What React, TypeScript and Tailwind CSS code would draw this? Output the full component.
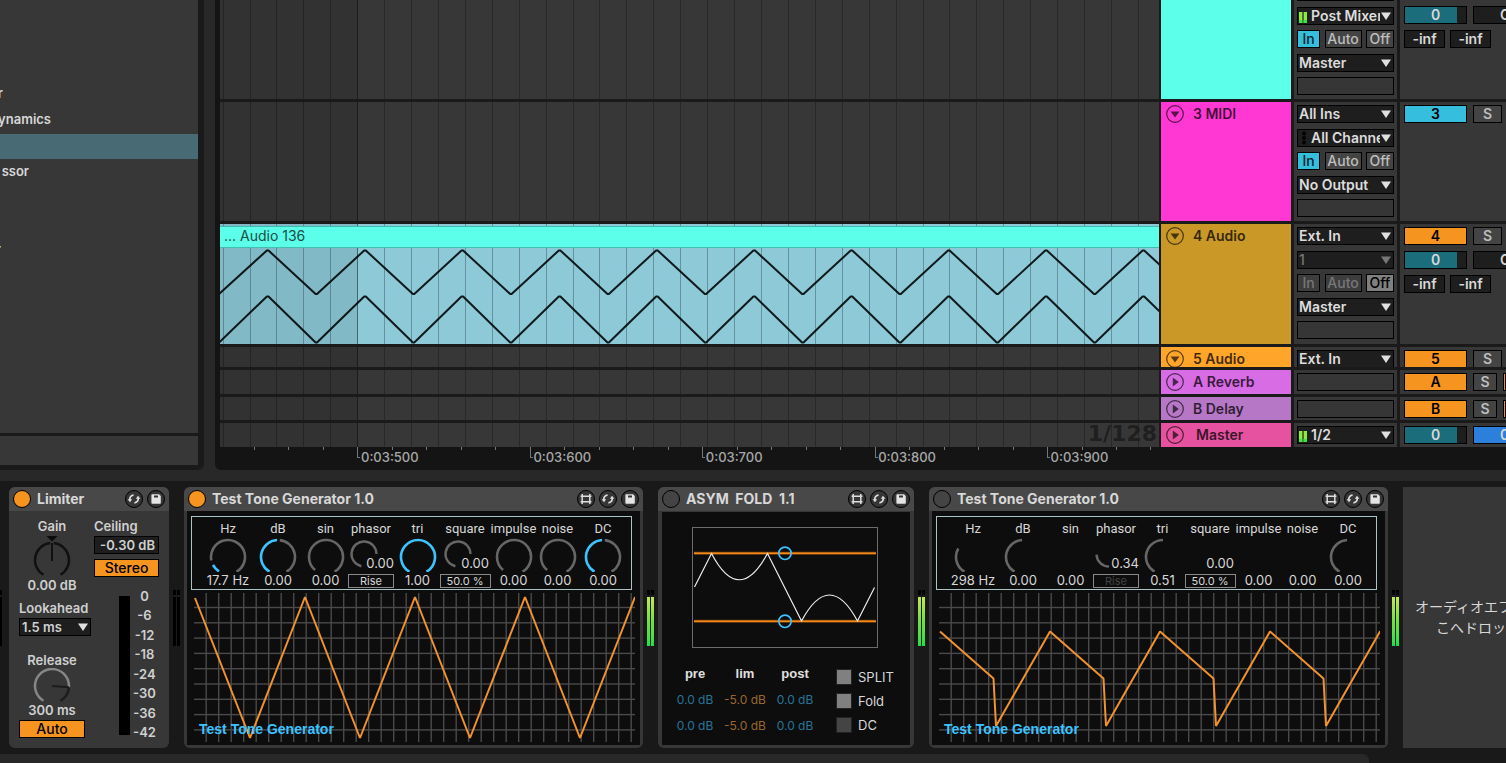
import type { ReactNode } from "react"
import clsx from "clsx"

const BLUE = "#3cc3ff"

const GRID_X = Array.from({ length: 80 }, (_, i) => Math.round(2.6 + i * 26.92))
const TICKS = Array.from({ length: 60 }, (_, i) => Math.round(34 + i * 34.48))

function polar(cx: number, cy: number, r: number, deg: number) {
  const a = ((deg - 90) * Math.PI) / 180
  return `${(cx + r * Math.cos(a)).toFixed(2)} ${(cy + r * Math.sin(a)).toFixed(2)}`
}

function arc(cx: number, cy: number, r: number, from: number, to: number) {
  return `M${polar(cx, cy, r, from)} A${r} ${r} 0 ${to - from > 180 ? 1 : 0} 1 ${polar(cx, cy, r, to)}`
}

/* ---------- arrangement ---------- */

function GridLines() {
  return (
    <svg className="absolute inset-0 w-full h-full" shapeRendering="crispEdges">
      <rect x="0" y="0" width="137" height="100%" fill="#000" opacity="0.08" />
      {GRID_X.map((x) => (
        <rect key={x} x={x} y="0" width="1" height="100%" fill="#000" opacity={x === 137 ? 0.5 : 0.27} />
      ))}
    </svg>
  )
}

function zigzag(top: number, bottom: number) {
  const pts = [`-1,${bottom}`]
  for (let i = 0; i < 22; i++) {
    const x = 47.7 + i * 97.3
    pts.push(`${x - 0.8},${top}`, `${x + 0.8},${top}`, `${x + 47.9},${bottom}`, `${x + 49.3},${bottom}`)
  }
  return pts.join(" ")
}

function Clip() {
  return (
    <div className="relative h-full bg-[#8dc9d7] pt-[2px]">
      <div className="absolute inset-0 overflow-hidden">
        <svg className="w-full h-full">
          <g fill="none" stroke="#10191b" strokeWidth="2" strokeLinejoin="round">
            <polyline points={zigzag(26.5, 70)} />
            <polyline points={zigzag(72.5, 118.5)} />
          </g>
        </svg>
        <GridLines />
      </div>
      <div className="relative h-[22px] bg-[#5cffe9] border-y border-[#41bfae] px-1 text-[14px] leading-[18px] text-[#1b4d46]">
        ... Audio 136
      </div>
    </div>
  )
}

function Caret({ dim }: { dim?: boolean }) {
  return (
    <svg className="absolute right-[2px] top-1 pointer-events-none" width="10" height="8" viewBox="0 0 10 8">
      <path d="M0 0.5H10L5 8z" fill={dim ? "#777" : "#e0e0e0"} />
    </svg>
  )
}

function MiniMeter() {
  return (
    <svg className="absolute left-px top-1" width="8" height="12">
      <path d="M0 0h3.400v11h-3.400zM4.600 0h3.400v11h-3.400z" fill="#8cec3e" />
      <path d="M0 8h3.400v3h-3.400zM4.600 8h3.400v3h-3.400z" fill="#3ee548" />
    </svg>
  )
}

function MidiDots() {
  return (
    <svg className="absolute left-[3px] top-px" width="6" height="14" fill="#000">
      <circle cx="3" cy="2.5" r="2" /><circle cx="3" cy="7" r="2" /><circle cx="3" cy="11.5" r="2" />
    </svg>
  )
}

function Chooser({ value, label, dim, icon }: { value: string; label: string; dim?: boolean; icon?: ReactNode }) {
  return (
    <div className="relative h-[18px] bg-[#1e1e1e] border border-black overflow-hidden">
      {icon}
      <div className="pr-[13px]">
        <select
          aria-label={label}
          className={clsx(
            "appearance-none block w-full h-4 leading-4 bg-transparent outline-none overflow-hidden text-[14px]",
            icon ? "pl-[13px]" : "pl-px",
            dim ? "text-[#777] font-medium" : "text-[#dcdcdc] font-semibold",
          )}
        >
          <option>{value}</option>
        </select>
      </div>
      <Caret dim={dim} />
    </div>
  )
}

const BTN = "h-[18px] shrink-0 border border-black flex items-center justify-center leading-4 overflow-hidden"
const MIX = "text-[14px] font-semibold"

function Monitor({ active, muted }: { active: "In" | "Off"; muted?: boolean }) {
  const idle = muted ? "bg-[#3d3d3d] text-[#777]" : "bg-[#444] text-[#bebebe]"
  return (
    <div className="flex justify-between text-[14px] font-medium">
      <button className={clsx(BTN, "w-[23px]", active === "In" ? "bg-[#35bfdc] text-[#06222a]" : idle)}>In</button>
      <button className={clsx(BTN, "w-[37px]", idle)}>Auto</button>
      <button className={clsx(BTN, "w-[28px]", active === "Off" ? "bg-[#808080] text-black" : idle)}>Off</button>
    </div>
  )
}

const Empty = () => <div className="h-[18px] border border-black bg-[#363636]" />

function Volume() {
  return (
    <div className={clsx(BTN, MIX, "relative w-[63px] bg-[#1e1e1e] text-[#d8d8d8]")}>
      <div className="absolute inset-y-0 left-0 w-[52px] bg-[#1c6d7c]" />
      <span className="relative">0</span>
    </div>
  )
}

function Activator({ name, blue }: { name: string; blue?: boolean }) {
  return (
    <button aria-label={`Track activator ${name}`} className={clsx(BTN, MIX, "w-[63px] text-black", blue ? "bg-[#35bfdc]" : "bg-[#f5941f]")}>
      {name}
    </button>
  )
}

function Solo({ narrow }: { narrow?: boolean }) {
  return <button className={clsx(BTN, MIX, "bg-[#444] text-[#bebebe]", narrow ? "w-[24px]" : "w-[29px]")}>S</button>
}

function Pan({ value, color }: { value: string; color: string }) {
  return <div className={clsx("h-[18px] w-[63px] shrink-0 border border-black leading-4 text-[#d8d8d8] pl-[26px]", MIX, color)}>{value}</div>
}

function Levels() {
  return (
    <>
      <div className="flex gap-[6px]">
        <Volume />
        <Pan value="C" color="bg-[#1e1e1e]" />
      </div>
      <div className="flex gap-[5px]">
        <div className={clsx(BTN, MIX, "w-[41px] bg-[#1e1e1e] text-[#d8d8d8]")}>-inf</div>
        <div className={clsx(BTN, MIX, "w-[41px] bg-[#1e1e1e] text-[#d8d8d8]")}>-inf</div>
      </div>
    </>
  )
}

interface TrackProps {
  name?: string; height: string; color: string; open?: boolean; indent?: boolean
  lane?: ReactNode; io: ReactNode; mixer: ReactNode; cut?: boolean
}

function Track({ name, height, color, open, indent, lane, io, mixer, cut }: TrackProps) {
  return (
    <div className={clsx("flex", height)}>
      <div className="relative flex-1 min-w-0 overflow-hidden bg-[#373737]">{lane ?? <GridLines />}</div>
      <div className={clsx("ml-[2px] w-[130px] overflow-hidden", color)}>
        {name && (
          <div className={clsx("flex items-center pl-[5px] pt-[3px] leading-[18px] text-black/75", MIX)}>
            <svg className="shrink-0" width="18" height="18" viewBox="0 0 18 18">
              <circle cx="9" cy="9" r="8.300" fill="none" stroke="#000" strokeOpacity="0.65" strokeWidth="1.2" />
              <path d={open ? "M4.5 6.5h9L9 12.5z" : "M6.8 4.5v9L12.8 9z"} fill="#000" fillOpacity="0.65" />
            </svg>
            <span className={indent ? "pl-3" : "pl-[9px]"}>{name}</span>
          </div>
        )}
      </div>
      <div className={clsx("ml-[3px] flex w-[103px] overflow-hidden bg-[#373737] px-[3px]", cut ? "items-end pb-1" : "items-start pt-[3px]")}>
        <div className="w-full">{io}</div>
      </div>
      <div className={clsx("ml-[3px] flex w-[106px] overflow-hidden bg-[#373737] pl-1", cut ? "items-end pb-[5px]" : "items-start pt-[3px]")}>
        <div className="w-full">{mixer}</div>
      </div>
    </div>
  )
}

const STACK = "flex flex-col justify-between h-[112px] shrink-0"
const LOOSE = "flex flex-col justify-start h-[112px] shrink-0 gap-[6px]"

function Arrangement() {
  return (
    <section className="flex-1 min-w-0 bg-[#141414] rounded-bl-md pl-[5px]">
      <div className="flex flex-col gap-[3px] bg-[#1a1a1a]">
        <Track
          height="h-[99px]" color="bg-[#5cffe9]" cut
          io={
            <div className={STACK}>
              <Empty />
              <Chooser label="Input channel" value="Post Mixer" icon={<MiniMeter />} />
              <Monitor active="In" />
              <Chooser label="Output" value="Master" />
              <Empty />
            </div>
          }
          mixer={
            <div className={LOOSE}>
              <Empty />
              <Levels />
            </div>
          }
        />
        <Track
          name="3 MIDI" height="h-[119px]" color="bg-[#ff38d4]" open
          io={
            <div className={STACK}>
              <Chooser label="MIDI from" value="All Ins" />
              <Chooser label="MIDI channel" value="All Channels" icon={<MidiDots />} />
              <Monitor active="In" />
              <Chooser label="MIDI to" value="No Output" />
              <Empty />
            </div>
          }
          mixer={<div className="flex gap-[6px]"><Activator name="3" blue /><Solo /></div>}
        />
        <Track
          name="4 Audio" height="h-[120px]" color="bg-[#c99827]" open lane={<Clip />}
          io={
            <div className={STACK}>
              <Chooser label="Audio from" value="Ext. In" />
              <Chooser label="Audio channel" value="1" dim />
              <Monitor active="Off" muted />
              <Chooser label="Audio to" value="Master" />
              <Empty />
            </div>
          }
          mixer={
            <div className={LOOSE}>
              <div className="flex gap-[6px]"><Activator name="4" /><Solo /></div>
              <Levels />
            </div>
          }
        />
        <Track
          name="5 Audio" height="h-[20px]" color="bg-[#ffa529]" open
          io={<Chooser label="Audio from" value="Ext. In" />}
          mixer={<div className="flex gap-[6px]"><Activator name="5" /><Solo /></div>}
        />
        <Track
          name="A Reverb" height="h-[24px]" color="bg-[#d86ce4]" io={<Empty />}
          mixer={
            <div className="flex gap-[6px]">
              <Activator name="A" /><Solo narrow /><div className="flex-1 bg-[#f5941f] border border-black" />
            </div>
          }
        />
        <Track
          name="B Delay" height="h-[23px]" color="bg-[#b677c6]" io={<Empty />}
          mixer={
            <div className="flex gap-[6px]">
              <Activator name="B" /><Solo narrow /><div className="flex-1 bg-[#f5941f] border border-black" />
            </div>
          }
        />
        <Track
          name="Master" height="h-[24px]" color="bg-[#e6529f]" indent
          lane={
            <>
              <GridLines />
              <span className="absolute right-[2px] top-0 text-[22px] leading-[22px] font-bold text-[#1f1f1f] font-['DejaVu_Sans']">1/128</span>
            </>
          }
          io={<Chooser label="Master out" value="1/2" icon={<MiniMeter />} />}
          mixer={<div className="flex gap-[6px]"><Volume /><Pan value="0" color="bg-[#2c7fdb]" /></div>}
        />
      </div>
      <div className="relative h-[23px] overflow-hidden">
        <svg className="absolute inset-0 w-full h-full" shapeRendering="crispEdges" fill="#777">
          {TICKS.filter((x) => x < 938).map((x, i) =>
            i % 5 === 3 ? (
              <path key={x} d={`M${x} 0h1v10h2v1h-3z`} />
            ) : (
              <rect key={x} x={x} y="0" width="1" height="3" />
            ),
          )}
        </svg>
        <div className="relative ml-[141px] grid w-[862px] grid-cols-5 text-[13px] leading-5 font-medium text-[#a8a8a8]">
          {["0:03:500", "0:03:600", "0:03:700", "0:03:800", "0:03:900"].map((t) => <span key={t}>{t}</span>)}
        </div>
      </div>
    </section>
  )
}

function Browser() {
  return (
    <aside className="w-[204px] bg-[#1a1a1a] rounded-br-md pr-[6px] pb-[5px] flex flex-col gap-[3px]">
      <div className="flex-1 bg-[#373737] overflow-hidden pt-[82px] text-[13px] leading-4 font-semibold text-[#d8d8d8] flex flex-col gap-px">
        {[["r", "w-[3px]"], ["ynamics", "w-[51px]"], ["", ""], ["ssor", "w-[29px]"], ["", ""], ["", ""], ["r", "w-px"]].map(([t, w], i) => (
          <div key={i} className={clsx("h-[25px]", i === 2 && "bg-[#476a75]")}>
            <div className={clsx("h-[22px] flex items-center justify-end overflow-hidden", w)}>{t}</div>
          </div>
        ))}
      </div>
      <div className="h-[29px] bg-[#373737]" />
    </aside>
  )
}

/* ---------- devices ---------- */

function RoundIcon({ label, children }: { label: string; children: ReactNode }) {
  return (
    <button aria-label={label} className="w-[18px] h-[18px] rounded-full border border-black bg-[#363636] flex items-center justify-center">
      <svg width="16" height="16" viewBox="-1 -1 16 16">{children}</svg>
    </button>
  )
}

function Device({ title, on, edit, width, children }: { title: string; on?: boolean; edit?: boolean; width: string; children: ReactNode }) {
  return (
    <article className={clsx("shrink-0 rounded-md overflow-hidden bg-[#373737] flex flex-col", width)}>
      <header className="h-6 shrink-0 bg-[#484848] px-1 flex items-center gap-1">
        <button aria-label="Device on" className={clsx("w-[18px] h-[18px] rounded-full border border-black", on ? "bg-[#f5941f]" : "bg-[#444]")} />
        <h2 className="flex-1 pl-[2px] text-[14px] leading-6 font-bold text-[#d8d8d8] whitespace-pre">{title}</h2>
        {edit && (
          <RoundIcon label="Edit patch">
            <path d="M3.2 2v10M10.8 2v10" stroke="#ddd" strokeWidth="1.5" />
            <path d="M1.6 4.300H12.400M1.600 9.700H12.400" stroke="#ddd" strokeWidth="1.4" />
          </RoundIcon>
        )}
        <RoundIcon label="Hot swap">
          <g fill="none" stroke="#ddd" strokeWidth="1.7">
            <path d="M2.8 8.2C2.4 5.4 4 3.4 6.6 3.2" />
            <path d="M11.2 5.8C11.6 8.6 10 10.6 7.4 10.8" />
          </g>
          <path d="M0.6 7.2h4.6L3 10.2zM13.4 6.8H8.8L11 3.8z" fill="#ddd" />
        </RoundIcon>
        <RoundIcon label="Save preset">
          <path d="M2.4 3.2Q2.4 2.2 3.4 2.2H10L11.8 4V11Q11.8 11.8 11 11.8H3.4Q2.4 11.8 2.4 11z" fill="#e4e4e4" />
          <path d="M5 3.4h4v2h-4z" fill="#333" />
        </RoundIcon>
      </header>
      {children}
    </article>
  )
}

function LevelMeter({ lit }: { lit?: boolean }) {
  const fill = lit ? "bg-linear-to-b from-[#c0e858] via-[#6fe03c] to-[#0be34a]" : "bg-black"
  return (
    <div className="w-[15px] shrink-0 pt-[103px] pl-1 flex gap-px">
      {[0, 1].map((i) => (
        <div key={i} className="w-[3px]">
          <div className="h-[5px] bg-black mb-[2px]" />
          <div className={clsx("h-[49px]", fill)} />
        </div>
      ))}
    </div>
  )
}

const LABEL = "text-[13px] leading-4 font-semibold text-[#d0d0d0]"

function Limiter() {
  return (
    <Device title="Limiter" on width="w-[160px]">
      <div className={clsx("flex justify-between px-[10px] pt-[7px]", LABEL)}>
        <div className="w-[73px]">
          <div className="w-[66px] flex flex-col items-center">
            <span>Gain</span>
            <svg width="40" height="43" viewBox="0 0 40 43">
              <path d="M14.5 2h11L20 7.5z" fill="#0c0c0c" />
              <path d={arc(20, 26, 17, -150, -6)} fill="none" stroke="#111" strokeWidth="2.5" />
              <path d={arc(20, 26, 17, 6, 150)} fill="none" stroke="#111" strokeWidth="2.5" />
              <path d="M20 9v18" stroke="#111" strokeWidth="2" />
            </svg>
            <span className="whitespace-nowrap">0.00 dB</span>
          </div>
          <label htmlFor="lookahead" className="block pt-[7px]">Lookahead</label>
          <div className="relative mt-[2px] h-[18px] w-[72px] bg-[#1e1e1e] border border-black">
            <select id="lookahead" className="appearance-none block w-full h-4 leading-4 bg-transparent pl-[2px] outline-none">
              <option>1.5 ms</option>
            </select>
            <Caret />
          </div>
          <div className="w-[66px] flex flex-col items-center pt-4">
            <span>Release</span>
            <svg width="40" height="34" viewBox="0 0 40 34">
              <path d={arc(20, 18, 17, 96, 150)} fill="none" stroke="#1c1c1c" strokeWidth="2.5" />
              <path d={arc(20, 18, 17, -150, 93)} fill="none" stroke="#868686" strokeWidth="2.5" />
              <path d="M20 18l17 1.3" stroke="#1c1c1c" strokeWidth="2" />
            </svg>
            <span className="whitespace-nowrap">300 ms</span>
            <button className={clsx(BTN, "mt-[2px] w-full bg-[#f5941f] text-black text-[14px] font-medium")}>Auto</button>
          </div>
        </div>
        <div className="w-[65px]">
          <label htmlFor="ceiling" className="block">Ceiling</label>
          <input id="ceiling" defaultValue="-0.30 dB" className="block w-full h-[18px] mt-[2px] px-[3px] bg-[#1e1e1e] border border-black text-right outline-none" />
          <button className={clsx(BTN, "mt-[5px] w-full bg-[#f5941f] text-black text-[14px] font-medium")}>Stereo</button>
          <div className="flex pt-[11px]">
            <div className="ml-[25px] mt-[8px] h-[139px] w-[11px] bg-black" />
            <div className="flex-1 h-[152px] flex flex-col justify-between text-center">
              {["0", "-6", "-12", "-18", "-24", "-30", "-36", "-42"].map((n) => <span key={n}>{n}</span>)}
            </div>
          </div>
        </div>
      </div>
    </Device>
  )
}

interface DialProps { label: string; value: string; lit?: [number, number]; rest?: [number, number] }

function Dial({ label, value, lit, rest }: DialProps) {
  return (
    <div className="flex flex-col items-center">
      <span className="font-[Roboto]">{label}</span>
      <svg width="40" height="35" viewBox="0 0 40 35" fill="none" strokeWidth="2.6">
        {rest && <path d={arc(20, 20, 17, rest[0], rest[1])} stroke="#666" />}
        {lit && <path d={arc(20, 20, 17, lit[0], lit[1])} stroke={BLUE} />}
      </svg>
      <span className="whitespace-nowrap">{value}</span>
    </div>
  )
}

interface SmallDialProps { label: string; value: string; rest?: [number, number]; box: string; boxDim?: boolean; boxWidth: string }

function SmallDial({ label, value, rest, box, boxDim, boxWidth }: SmallDialProps) {
  return (
    <div className="relative flex flex-col items-center">
      <span className="font-[Roboto]">{label}</span>
      <svg width="46" height="37" viewBox="0 0 46 37" fill="none" strokeWidth="2.4">
        {rest && <path d={arc(16, 17, 12.5, rest[0], rest[1])} stroke="#666" />}
      </svg>
      <span className="absolute right-0 top-[34px]">{value}</span>
      <button className={clsx("h-[14px] border border-[#8a8a8a] text-[11px] leading-3 text-center", boxWidth, boxDim ? "text-[#444]" : "text-[#d8d8d8]")}>{box}</button>
    </div>
  )
}

function Scope({ points }: { points: string }) {
  return (
    <div className="relative ml-[7px] mt-[3px]">
      <svg width="441" height="149" viewBox="0 0 441 149">
        <g fill="#4a4a4a">
          {Array.from({ length: 35 }, (_, i) => <rect key={i} x={11.5 + i * 12.5} y="0" width="1.400" height="149" />)}
          {Array.from({ length: 9 }, (_, i) => <rect key={i} x="0" y={13.8 + i * 15.3} width="441" height="1.400" />)}
        </g>
        <polyline points={points} fill="none" stroke="#f0922e" strokeWidth="2" strokeLinejoin="bevel" />
      </svg>
      <span className="absolute left-[5px] bottom-[5px] text-[14px] leading-4 font-bold text-[#3cc3ff] font-['Liberation_Sans']">Test Tone Generator</span>
    </div>
  )
}

const TRI = Array.from({ length: 9 }, (_, i) => `${1 + i * 55},${i === 0 ? 5 : i % 2 ? 145 : 4}`).join(" ")
const SAW = Array.from({ length: 5 }, (_, i) => {
  const x = 1 + i * 110
  return `${x},38.5 ${x + 53.5},85.5 ${x + 56},133`
}).join(" ")

function ToneGenerator({ on }: { on?: boolean }) {
  return (
    <Device title="Test Tone Generator 1.0" on={on} edit width="w-[459px]">
      <div className="mx-[3px] mb-[3px] flex-1 bg-[#0d0d0d] pt-[5px]">
        <div className="ml-1 w-[441px] h-[74px] border border-[#a9c3c6] pt-[4px] pl-[11px] grid grid-cols-[50px_50px_45px_46px_47px_48px_49px_39px_52px] text-[13px] leading-4 text-[#d8d8d8]">
          <Dial label="Hz" value={on ? "17.7 Hz" : "298 Hz"} lit={on ? [-148, -118] : undefined} rest={on ? [-102, 150] : [-150, -60]} />
          <Dial label="dB" value="0.00" lit={on ? [-150, -3] : undefined} rest={on ? [6, 150] : [-150, -3]} />
          <Dial label="sin" value="0.00" rest={on ? [-140, 150] : undefined} />
          <SmallDial label="phasor" value={on ? "0.00" : "0.34"} rest={on ? [-168, 90] : [-180, -93]} box="Rise" boxDim={!on} boxWidth="w-[46px]" />
          <Dial label="tri" value={on ? "1.00" : "0.51"} lit={on ? [-150, 150] : undefined} rest={on ? undefined : [-150, 0]} />
          <SmallDial label="square" value="0.00" rest={on ? [-168, 90] : undefined} box="50.0 %" boxWidth="w-[51px]" />
          <Dial label="impulse" value="0.00" rest={on ? [-140, 150] : undefined} />
          <Dial label="noise" value="0.00" rest={on ? [-140, 150] : undefined} />
          <Dial label="DC" value="0.00" lit={on ? [-150, -3] : undefined} rest={on ? [6, 150] : [-150, -3]} />
        </div>
        <Scope points={on ? TRI : SAW} />
      </div>
    </Device>
  )
}

function AsymFold() {
  return (
    <Device title="ASYM  FOLD  1.1" edit width="w-[256px]">
      <div className="mx-1 mb-[3px] mt-px flex-1 bg-[#0d0d0d]">
        <svg className="ml-[30px] mt-[15px]" width="186" height="121" viewBox="0 0 186 121" fill="none">
          <rect x="0.5" y="0.5" width="185" height="120" stroke="#6c6c6c" />
          <path d="M2 26.3H184M2 94.3H184" stroke="#7a430f" strokeWidth="3" />
          <path d="M2 26.3H184M2 94.3H184" stroke="#f58a1a" strokeWidth="1.4" />
          <path d="M2.5 60L19.5 26.5Q47 79 75.5 26.5L109.5 94Q137.5 42 165.5 94L182.5 60.5" stroke="#eee" strokeWidth="1.2" />
          <circle cx="93" cy="26.3" r="6.2" stroke={BLUE} strokeWidth="1.6" />
          <circle cx="93" cy="94.3" r="6.2" stroke={BLUE} strokeWidth="1.6" />
        </svg>
        <div className="flex gap-4 pl-[8px] pt-[13px]">
          <div className="grid grid-cols-3 w-[150px] grid-rows-[26px_26px_26px] items-center text-center text-[12px] leading-4">
            {["pre", "lim", "post"].map((t) => (
              <b key={t} className="text-[13px] text-[#e0e0e0] font-['Liberation_Sans']">{t}</b>
            ))}
            {[0, 1].map((r) => [
              <span key={`a${r}`} className="text-[#28759a]">0.0 dB</span>,
              <span key={`b${r}`} className="text-[#9c672e]">-5.0 dB</span>,
              <span key={`c${r}`} className="text-[#28759a]">0.0 dB</span>,
            ])}
          </div>
          <div className="flex flex-col gap-2 pt-2">
            {[["SPLIT", true], ["Fold", true], ["DC", false]].map(([name, v]) => (
              <label key={String(name)} className="flex items-center gap-[6px] text-[13px] leading-4 text-[#d8d8d8]">
                <input type="checkbox" defaultChecked={Boolean(v)} className="appearance-none w-4 h-4 bg-[#444] checked:bg-[#808080] border border-[#222]" />
                {name}
              </label>
            ))}
          </div>
        </div>
      </div>
    </Device>
  )
}

export default function App() {
  return (
    <div className="min-h-screen overflow-hidden bg-[#282828] font-[Inter,'Noto_Sans_CJK_JP',sans-serif] flex flex-col">
      <main className="flex gap-[11px]">
        <Browser />
        <Arrangement />
      </main>
      <div className="mt-[11px] flex-1 flex flex-col bg-[#191919]">
        <div className="flex h-[273px] py-[6px] overflow-hidden">
          <div className="w-[9px] shrink-0 pt-[103px]">
            <div className="w-[2px] h-[5px] bg-black mb-[2px]" />
            <div className="w-[2px] h-[49px] bg-black" />
          </div>
          <Limiter />
          <LevelMeter />
          <ToneGenerator on />
          <LevelMeter lit />
          <AsymFold />
          <LevelMeter lit />
          <ToneGenerator />
          <LevelMeter lit />
          <div className="flex-1 min-w-0 overflow-hidden bg-[#373737] pt-[109px] pl-3 text-[14px] leading-[21px] text-[#d8d8d8] whitespace-nowrap">
            <p>オーディオエフ</p>
            <p className="pl-[21px]">こへドロッ</p>
          </div>
        </div>
        <div className="flex-1 min-h-[9px] mr-[137px] bg-[#282828] rounded-tr-md" />
      </div>
    </div>
  )
}
